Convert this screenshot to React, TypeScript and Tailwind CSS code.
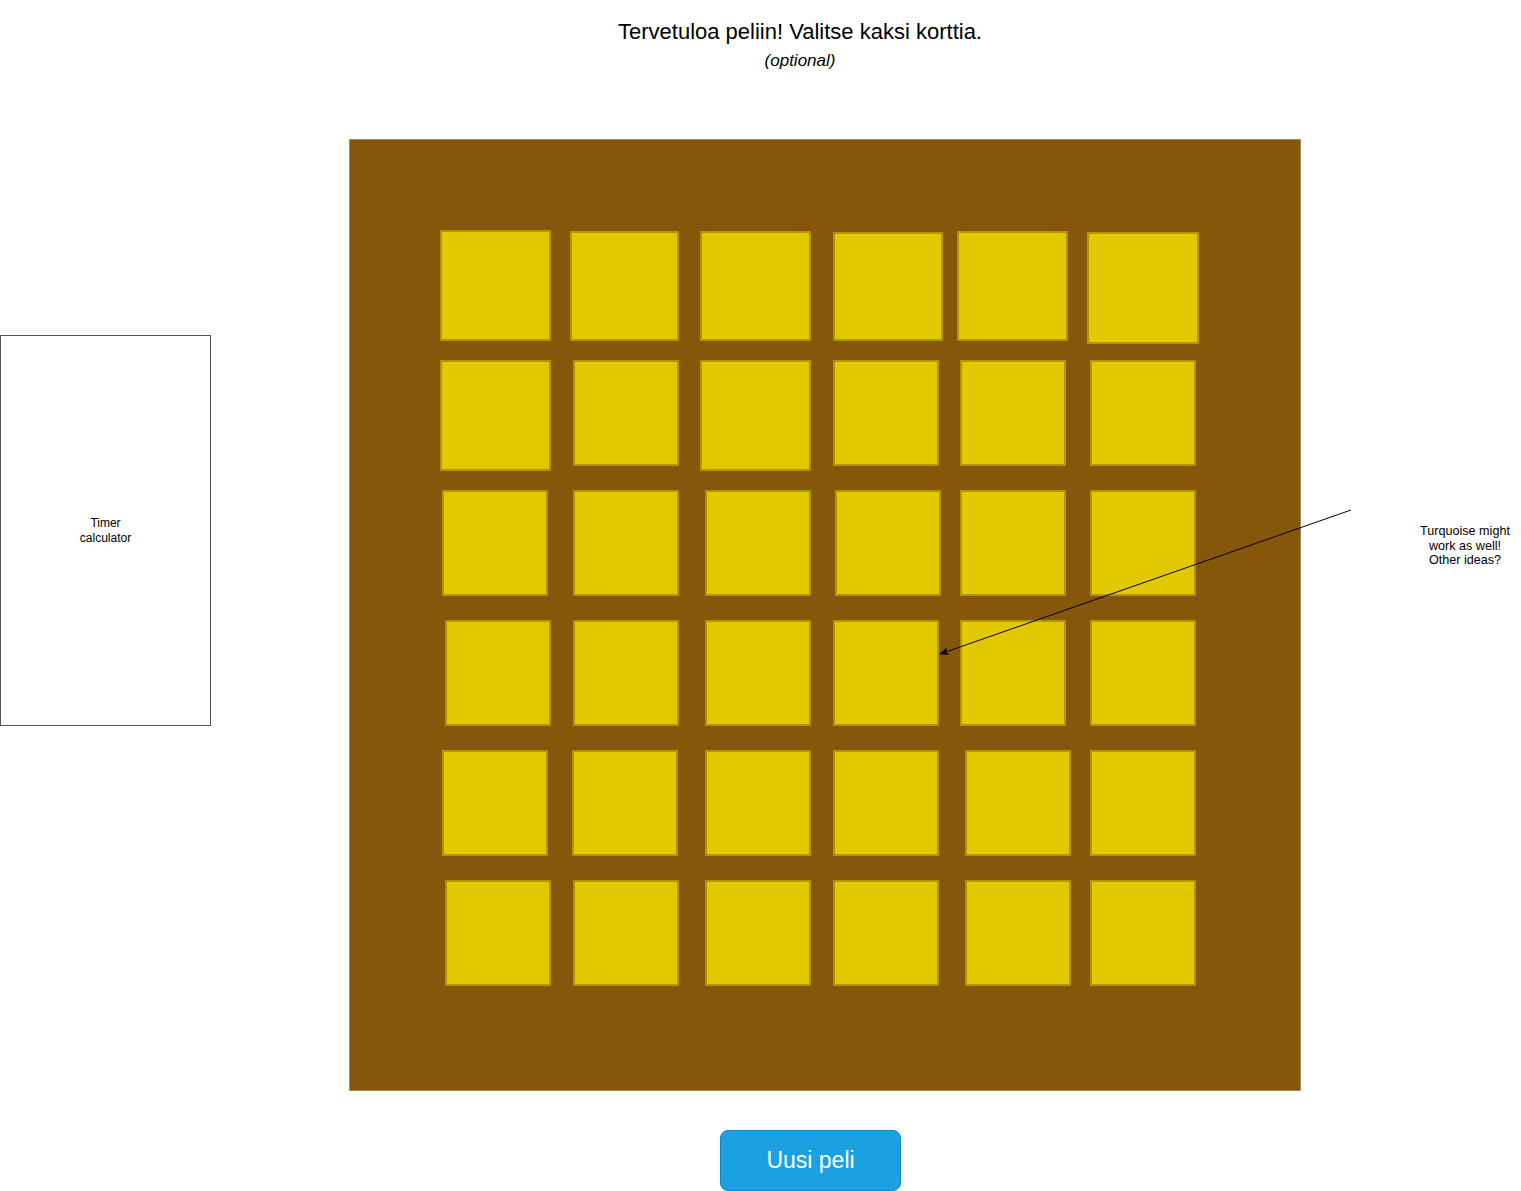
const CARDS: string[][] = [
  [
    "ml-0 mt-0 w-[111px] h-[111px]",
    "ml-0 mt-[1px] w-[109px] h-[110px]",
    "ml-0 mt-[1px] w-[111px] h-[110px]",
    "ml-[3px] mt-[2px] w-[110px] h-[109px]",
    "-ml-[3px] mt-[1px] w-[111px] h-[110px]",
    "-ml-[3px] mt-[2px] w-[112px] h-[112px]",
  ],
  [
    "ml-0 mt-0 w-[111px] h-[111px]",
    "ml-[3px] mt-0 w-[106px] h-[106px]",
    "ml-0 mt-0 w-[111px] h-[111px]",
    "ml-[3px] mt-0 w-[106px] h-[106px]",
    "ml-0 mt-0 w-[106px] h-[106px]",
    "ml-0 mt-0 w-[106px] h-[106px]",
  ],
  [
    "ml-[2px] mt-0 w-[106px] h-[106px]",
    "ml-[3px] mt-0 w-[106px] h-[106px]",
    "ml-[5px] mt-0 w-[106px] h-[106px]",
    "ml-[5px] mt-0 w-[106px] h-[106px]",
    "ml-0 mt-0 w-[106px] h-[106px]",
    "ml-0 mt-0 w-[106px] h-[106px]",
  ],
  [
    "ml-[5px] mt-0 w-[106px] h-[106px]",
    "ml-[3px] mt-0 w-[106px] h-[106px]",
    "ml-[5px] mt-0 w-[106px] h-[106px]",
    "ml-[3px] mt-0 w-[106px] h-[106px]",
    "ml-0 mt-0 w-[106px] h-[106px]",
    "ml-0 mt-0 w-[106px] h-[106px]",
  ],
  [
    "ml-[2px] mt-0 w-[106px] h-[106px]",
    "ml-[2px] mt-0 w-[106px] h-[106px]",
    "ml-[5px] mt-0 w-[106px] h-[106px]",
    "ml-[3px] mt-0 w-[106px] h-[106px]",
    "ml-[5px] mt-0 w-[106px] h-[106px]",
    "ml-0 mt-0 w-[106px] h-[106px]",
  ],
  [
    "ml-[5px] mt-0 w-[106px] h-[106px]",
    "ml-[3px] mt-0 w-[106px] h-[106px]",
    "ml-[5px] mt-0 w-[106px] h-[106px]",
    "ml-[3px] mt-0 w-[106px] h-[106px]",
    "ml-[5px] mt-0 w-[106px] h-[106px]",
    "ml-0 mt-0 w-[106px] h-[106px]",
  ],
];

function Board() {
  return (
    <div className="w-[952px] h-[952px] shrink-0 bg-[#86560a] border border-[#a8895a] pl-[90px] pt-[90px]">
      <div className="grid grid-cols-[repeat(6,130px)] grid-rows-[repeat(6,130px)]">
        {CARDS.flatMap((row, r) =>
          row.map((cls, c) => (
            <div key={`${r}-${c}`} className="flex items-start">
              <div className={`${cls} shrink-0 bg-[#e2c800] border-2 border-[#b09600]`} />
            </div>
          ))
        )}
      </div>
    </div>
  );
}

export default function App() {
  return (
    <div className="relative w-[1521px] h-[1191px] overflow-hidden bg-white text-black font-['Liberation_Sans',Arial,sans-serif]">
      <header className="ml-[600px] w-[400px] pt-[19px] text-center">
        <h1 className="text-[22px] leading-[26px]">Tervetuloa peliin! Valitse kaksi korttia.</h1>
        <p className="mt-[6px] text-[17px] leading-[20px] italic">(optional)</p>
      </header>

      <div className="mt-[68px] flex items-start">
        <div className="mt-[196px] w-[211px] h-[391px] shrink-0 border border-[#555] flex items-center justify-center text-center text-[12px] leading-[15px]">
          <span>
            Timer
            <br />
            calculator
          </span>
        </div>
        <div className="ml-[138px]">
          <Board />
        </div>
        <p className="ml-[108px] mt-[385px] w-[112px] text-center text-[12.6px] leading-[14.5px]">
          Turquoise might
          <br />
          work as well!
          <br />
          Other ideas?
        </p>
      </div>

      <div className="mt-[39px] ml-[720px]">
        <button className="w-[181px] h-[61px] rounded-[8px] bg-[#1ba1e2] border border-[#1186c4] text-white text-[23px]">
          Uusi peli
        </button>
      </div>

      <svg className="absolute left-0 top-0 pointer-events-none" width="1521" height="1191">
        <defs>
          <marker id="arr" markerWidth="10" markerHeight="8" refX="9" refY="4" orient="auto" markerUnits="userSpaceOnUse">
            <path d="M0,0 L10,4 L0,8 L3,4 Z" fill="#000" />
          </marker>
        </defs>
        <line x1="1351" y1="510" x2="940" y2="654" stroke="#000" strokeWidth="1" markerEnd="url(#arr)" />
      </svg>
    </div>
  );
}
